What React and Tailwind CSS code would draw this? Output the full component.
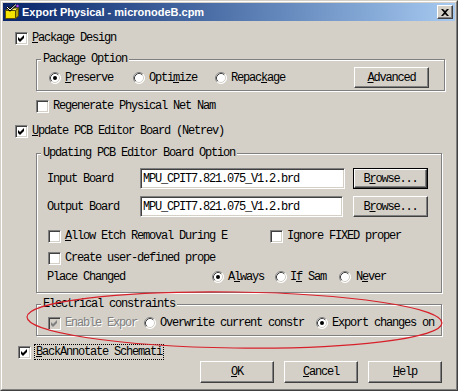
const mono = "font-['Liberation_Mono',monospace] text-[12px] tracking-[-1.2px] text-black";

const Check = ({ checked = false, disabled = false }) => (
  <span
    className={
      disabled
        ? "relative block h-[13px] w-[13px] shrink-0 border border-t-[#808080] border-l-[#808080] border-r-white border-b-white bg-[#d4d0c8] shadow-[inset_1px_1px_0_#404040,inset_-1px_-1px_0_#d4d0c8]"
        : "relative block h-[13px] w-[13px] shrink-0 border border-t-[#808080] border-l-[#808080] border-r-white border-b-white bg-white shadow-[inset_1px_1px_0_#404040,inset_-1px_-1px_0_#d4d0c8]"
    }
  >
    {checked ? (
      <svg width="13" height="13" viewBox="0 0 13 13" className="absolute -left-px -top-px">
        <polygon points="3,5 5,7 9,3 9,6 5,10 3,8" fill={disabled ? "#808080" : "#000"} />
      </svg>
    ) : null}
  </span>
);

const Radio = ({ checked = false }) => (
  <svg width="12" height="12" viewBox="0 0 12 12" className="block shrink-0">
    <circle cx="6" cy="6" r="5.5" fill="#fff" />
    <path d="M2.11 9.89 A5.5 5.5 0 0 1 9.89 2.11" stroke="#808080" strokeWidth="1" fill="none" />
    <path d="M9.89 2.11 A5.5 5.5 0 0 1 2.11 9.89" stroke="#fff" strokeWidth="1" fill="none" />
    <path d="M2.82 9.18 A4.5 4.5 0 0 1 9.18 2.82" stroke="#404040" strokeWidth="1" fill="none" />
    <path d="M9.18 2.82 A4.5 4.5 0 0 1 2.82 9.18" stroke="#d4d0c8" strokeWidth="1" fill="none" />
    {checked ? <circle cx="6" cy="6" r="2" fill="#000" /> : null}
  </svg>
);

const Button = ({ children, className = "" }) => (
  <div
    className={`flex items-center justify-center bg-[#d4d0c8] border border-t-white border-l-white border-r-[#404040] border-b-[#404040] shadow-[inset_-1px_-1px_0_#808080] ${className}`}
  >
    {children}
  </div>
);

const DefaultButton = ({ children, className = "" }) => (
  <div className={`border border-black ${className}`}>
    <div className="flex h-full w-full items-center justify-center bg-[#d4d0c8] border border-t-white border-l-white border-r-[#404040] border-b-[#404040] shadow-[inset_-1px_-1px_0_#808080]">
      {children}
    </div>
  </div>
);

const Field = ({ value, className = "" }) => (
  <div
    className={`flex items-center bg-white pl-[2px] border border-t-[#808080] border-l-[#808080] border-r-white border-b-white shadow-[inset_1px_1px_0_#404040,inset_-1px_-1px_0_#d4d0c8] ${className}`}
  >
    {value}
  </div>
);

const Group = ({ legend, className = "", children }) => (
  <fieldset
    className={`border border-[#808080] shadow-[inset_1px_1px_0_#fff,1px_1px_0_#fff] ${className}`}
  >
    <legend className="ml-[4px] px-[2px] leading-[14px] bg-[#d4d0c8]">{legend}</legend>
    {children}
  </fieldset>
);

const TitleIcon = () => (
  <svg width="16" height="16" viewBox="0 0 16 16" className="block shrink-0">
    <rect x="1.5" y="6.5" width="10" height="8" fill="#f4e400" stroke="#5c5000" />
    <polygon points="11.5,6.5 14.5,4 14.5,12 11.5,14.5" fill="#b8a800" stroke="#5c5000" />
    <polygon points="1.5,6.5 4.5,4 14.5,4 11.5,6.5" fill="#fff470" stroke="#5c5000" />
    <path d="M3 3 L6 6 L12 0.5" stroke="#000" strokeWidth="2.4" fill="none" />
    <path d="M3 3 L6 6 L12 0.5" stroke="#fff" strokeWidth="1" fill="none" />
    <circle cx="13.5" cy="2" r="1.2" fill="#c040ff" />
  </svg>
);

export default function App() {
  return (
    <div className="relative h-[391px] w-[458px] overflow-hidden bg-[#d4d0c8] border border-t-[#d4d0c8] border-l-[#d4d0c8] border-r-[#404040] border-b-[#404040]">
      <div className="flex h-full flex-col border border-t-white border-l-white border-r-[#808080] border-b-[#808080] p-px">
        <div className="flex h-[18px] shrink-0 items-center bg-linear-to-r from-[#0a246a] to-[#a6caf0] pl-[1px] pr-[2px]">
          <TitleIcon />
          <span className="ml-[2px] font-['Liberation_Sans',Arial,sans-serif] text-[11px] font-bold text-white">
            Export Physical - micronodeB.cpm
          </span>
          <Button className="ml-auto h-[14px] w-[16px]">
            <svg width="8" height="7" viewBox="0 0 8 7" className="block">
              <path d="M0 0h2l2 2 2-2h2L5 3.5 8 7H6L4 5 2 7H0l3-3.5z" fill="#000" />
            </svg>
          </Button>
        </div>

        <div className={`flex flex-col ${mono}`}>
          <div className="mt-[10px] ml-[12px] flex h-[14px] items-center gap-[4px]">
            <Check checked />
            <span>
              <u className="underline-offset-[1px]">P</u>ackage Design
            </span>
          </div>

          <Group legend="Package Option" className="mt-[7px] ml-[33px] w-[409px]">
            <div className="mt-px mb-[2px] flex h-[21px] items-center pl-[12px] pr-[15px]">
              <div className="flex w-[84px] items-center gap-[4px]">
                <Radio checked />
                <span>
                  <u className="underline-offset-[1px]">P</u>reserve
                </span>
              </div>
              <div className="flex w-[82px] items-center gap-[4px]">
                <Radio />
                <span>
                  Opti<u className="underline-offset-[1px]">m</u>ize
                </span>
              </div>
              <div className="flex items-center gap-[4px]">
                <Radio />
                <span>
                  Repac<u className="underline-offset-[1px]">k</u>age
                </span>
              </div>
              <Button className="ml-auto h-[21px] w-[75px]">
                <span>
                  <u className="underline-offset-[1px]">A</u>dvanced
                </span>
              </Button>
            </div>
          </Group>

          <div className="mt-[8px] ml-[33px] flex h-[14px] items-center gap-[4px]">
            <Check />
            <span>Regenerate Physical Net Nam</span>
          </div>

          <div className="mt-[11px] ml-[12px] flex h-[14px] items-center gap-[4px]">
            <Check checked />
            <span>
              <u className="underline-offset-[1px]">U</u>pdate PCB Editor Board (Netrev)
            </span>
          </div>

          <Group legend="Updating PCB Editor Board Option" className="mt-[8px] ml-[33px] w-[406px] pb-[8px]">
            <div className="mt-[8px] flex h-[21px] items-center pl-[10px]">
              <span className="w-[93px]">Input Board</span>
              <Field value="MPU_CPIT7.821.075_V1.2.brd" className="h-[21px] w-[205px]" />
              <DefaultButton className="ml-[8px] h-[21px] w-[75px]">
                <span>
                  B<u className="underline-offset-[1px]">r</u>owse...
                </span>
              </DefaultButton>
            </div>
            <div className="mt-[7px] flex h-[21px] items-center pl-[10px]">
              <span className="w-[93px]">Output Board</span>
              <Field value="MPU_CPIT7.821.075_V1.2.brd" className="h-[21px] w-[203px]" />
              <Button className="ml-[10px] h-[21px] w-[75px]">
                <span>
                  B<u className="underline-offset-[1px]">r</u>owse...
                </span>
              </Button>
            </div>
            <div className="mt-[12px] flex h-[14px] items-center pl-[11px]">
              <div className="flex w-[222px] items-center gap-[4px]">
                <Check />
                <span>
                  <u className="underline-offset-[1px]">A</u>llow Etch Removal During E
                </span>
              </div>
              <div className="flex items-center gap-[4px]">
                <Check />
                <span>Ignore FIXED proper</span>
              </div>
            </div>
            <div className="mt-[8px] flex h-[14px] items-center gap-[4px] pl-[11px]">
              <Check />
              <span>Create user-defined prope</span>
            </div>
            <div className="mt-[5px] flex h-[14px] items-center pl-[10px]">
              <span className="w-[165px]">Place Changed</span>
              <div className="flex w-[63px] items-center gap-[4px]">
                <Radio checked />
                <span>
                  A<u className="underline-offset-[1px]">l</u>ways
                </span>
              </div>
              <div className="flex w-[64px] items-center gap-[3px]">
                <Radio />
                <span>
                  I<u className="underline-offset-[1px]">f</u> Sam
                </span>
              </div>
              <div className="flex items-center gap-[5px]">
                <Radio />
                <span>
                  N<u className="underline-offset-[1px]">e</u>ver
                </span>
              </div>
            </div>
          </Group>

          <Group legend="Electrical constraints" className="mt-[4px] ml-[33px] w-[406px] pb-[5px]">
            <div className="mt-[5px] flex h-[14px] items-center pl-[11px]">
              <div className="flex w-[96px] items-center gap-[4px]">
                <Check checked disabled />
                <span className="text-[#808080] [text-shadow:1px_1px_0_#fff]">Enable Expor</span>
              </div>
              <div className="flex w-[172px] items-center gap-[4px]">
                <Radio />
                <span className="whitespace-nowrap">Overwrite current constr</span>
              </div>
              <div className="flex items-center gap-[4px]">
                <Radio checked />
                <span>Export changes on</span>
              </div>
            </div>
          </Group>

          <div className="mt-[8px] ml-[15px] flex h-[16px] items-center gap-[3px]">
            <Check checked />
            <span className="flex h-[16px] items-center border border-dotted border-black px-px">
              <span>
                <u className="underline-offset-[1px]">B</u>ackAnnotate Schemati
              </span>
            </span>
          </div>

          <div className="mt-px mr-[13px] flex h-[22px] justify-end gap-[10px]">
            <Button className="h-[22px] w-[74px]">
              <span>
                <u className="underline-offset-[1px]">O</u>K
              </span>
            </Button>
            <Button className="h-[22px] w-[74px]">
              <span>
                <u className="underline-offset-[1px]">C</u>ancel
              </span>
            </Button>
            <Button className="h-[22px] w-[74px]">
              <span>
                <u className="underline-offset-[1px]">H</u>elp
              </span>
            </Button>
          </div>
        </div>
      </div>

      <svg width="458" height="391" viewBox="0 0 458 391" className="pointer-events-none absolute -left-px -top-px">
        <ellipse cx="234.5" cy="320" rx="207.5" ry="28" transform="rotate(0.8 234.5 320)" fill="none" stroke="#d8202a" strokeWidth="1.2" />
      </svg>
    </div>
  );
}
